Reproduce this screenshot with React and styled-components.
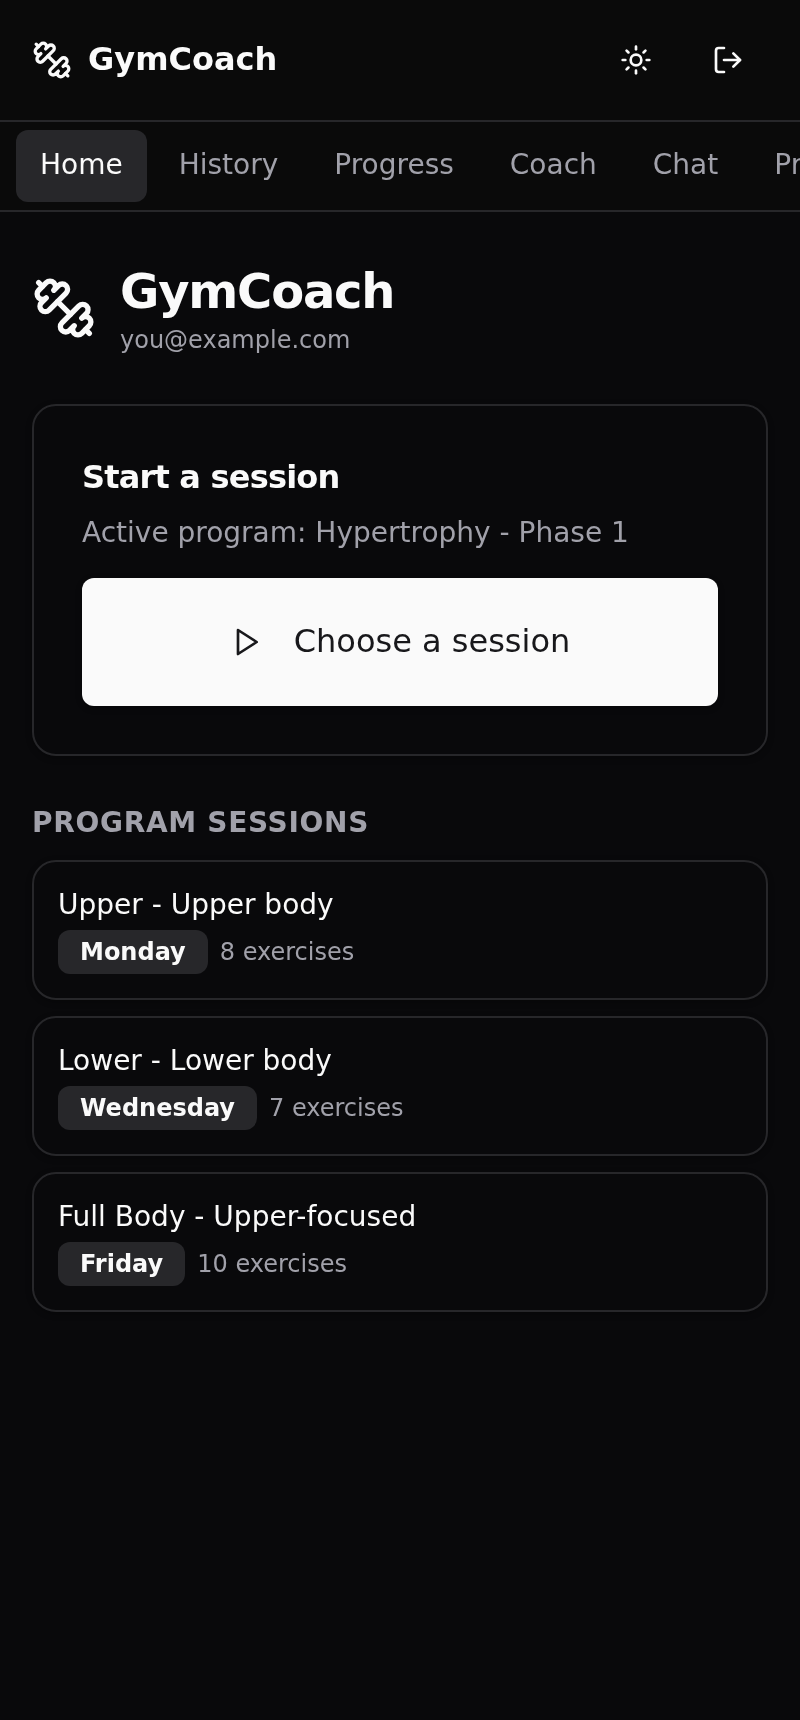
import React, { useState } from 'react'
import styled, { createGlobalStyle } from 'styled-components'
import { LogOut, Sun } from 'lucide-react'

const GlobalStyle = createGlobalStyle`
  * {
    box-sizing: border-box;
  }
  body {
    margin: 0;
    background: #09090b;
    color: #fafafa;
    font-family: 'DejaVu Sans', Verdana, sans-serif;
    font-size: 28px;
    line-height: 38px;
  }
`
const Page = styled.div`
  min-height: 100vh;
`
const Header = styled.header`
  display: flex;
  align-items: center;
  justify-content: space-between;
  padding: 20px 32px;
  background: #0a0a0a;
  border-bottom: 2px solid #27272a;
`
const Brand = styled.a`
  display: flex;
  align-items: center;
  gap: 16px;
  color: inherit;
  font-size: 32px;
  font-weight: 700;
  line-height: 46px;
  text-decoration: none;
`
const BrandName = styled.span`
  padding-bottom: 2px;
`
const Actions = styled.div`
  display: flex;
  gap: 12px;
`
const IconButton = styled.button`
  display: flex;
  align-items: center;
  justify-content: center;
  width: 80px;
  height: 80px;
  padding: 0;
  border: 0;
  border-radius: 12px;
  background: transparent;
  color: inherit;
  cursor: pointer;
  &:hover {
    background: #27272a;
  }
`
const Nav = styled.nav`
  display: flex;
  gap: 8px;
  padding: 8px 16px;
  overflow-x: auto;
  scrollbar-width: none;
  background: #0a0a0a;
  border-bottom: 2px solid #27272a;
`
const NavLink = styled.a`
  flex: none;
  padding: 16px 24px 18px;
  border-radius: 12px;
  background: ${({ $active }) => ($active ? '#27272a' : 'transparent')};
  color: ${({ $active }) => ($active ? '#fafafa' : '#a1a1aa')};
  text-decoration: none;
  white-space: nowrap;
`
const Main = styled.main`
  display: flex;
  flex-direction: column;
  gap: 48px;
  padding: 48px 32px;
`
const Hero = styled.div`
  display: flex;
  align-items: center;
  gap: 24px;
`
const Title = styled.h1`
  margin: 0 0 2px;
  font-size: 48px;
  line-height: 62px;
  letter-spacing: -0.025em;
`
const SmallText = styled.p`
  margin: 0;
  color: #a1a1aa;
  font-size: 24px;
  line-height: 32px;
`
const Card = styled.section`
  padding: 48px;
  border: 2px solid #27272a;
  border-radius: 24px;
  box-shadow: 0 2px 6px rgba(0, 0, 0, 0.3);
`
const CardTitle = styled.h2`
  margin: 0 0 14px;
  font-size: 32px;
  line-height: 46px;
  letter-spacing: -0.025em;
`
const CardText = styled.p`
  margin: 0 0 26px;
  color: #a1a1aa;
`
const PrimaryButton = styled.button`
  display: flex;
  align-items: center;
  justify-content: center;
  gap: 32px;
  width: 100%;
  height: 128px;
  border: 0;
  border-radius: 12px;
  background: #fafafa;
  color: #18181b;
  font-family: inherit;
  font-size: 32px;
  line-height: 46px;
  box-shadow: 0 2px 6px rgba(0, 0, 0, 0.3);
  cursor: pointer;
`
const ButtonLabel = styled.span`
  padding-bottom: 2px;
`
const Sessions = styled.section`
  display: flex;
  flex-direction: column;
  gap: 18px;
`
const SectionTitle = styled.h2`
  margin: 0;
  color: #a1a1aa;
  font-size: 28px;
  letter-spacing: 0.025em;
  text-transform: uppercase;
`
const SessionList = styled.ul`
  display: flex;
  flex-direction: column;
  gap: 16px;
  margin: 0;
  padding: 0;
  list-style: none;
`
const SessionItem = styled.li`
  display: flex;
  flex-direction: column;
  gap: 6px;
  padding: 24px;
  border: 2px solid #27272a;
  border-radius: 24px;
  box-shadow: 0 2px 6px rgba(0, 0, 0, 0.3);
`
const SessionMeta = styled.div`
  display: flex;
  align-items: center;
  gap: 12px;
`
const DayBadge = styled.span`
  padding: 6px 22px;
  border-radius: 12px;
  background: #27272a;
  font-size: 24px;
  font-weight: 700;
  line-height: 32px;
`

const zNav = [
  { name: 'Home', link: '#home' },
  { name: 'History', link: '#history' },
  { name: 'Progress', link: '#progress' },
  { name: 'Coach', link: '#coach' },
  { name: 'Chat', link: '#chat' },
  { name: 'Programs', link: '#programs' },
]

const zSessions = [
  { name: 'Upper - Upper body', day: 'Monday', exercises: 8 },
  { name: 'Lower - Lower body', day: 'Wednesday', exercises: 7 },
  { name: 'Full Body - Upper-focused', day: 'Friday', exercises: 10 },
]

const StrokeIcon = ({ size, children }) => (
  <svg width={size} height={size} viewBox="0 0 24 24" fill="none" stroke="currentColor" strokeWidth="2" strokeLinecap="round" strokeLinejoin="round" aria-hidden="true">
    {children}
  </svg>
)

const DumbbellIcon = ({ size }) => (
  <StrokeIcon size={size}>
    <path d="M14.4 14.4 9.6 9.6" />
    <path d="M18.657 21.485a2 2 0 1 1-2.829-2.828l-1.767 1.768a2 2 0 1 1-2.829-2.829l6.364-6.364a2 2 0 1 1 2.829 2.829l-1.768 1.767a2 2 0 1 1 2.828 2.829z" />
    <path d="m21.5 21.5-1.4-1.4" />
    <path d="M3.9 3.9 2.5 2.5" />
    <path d="M6.404 12.768a2 2 0 1 1-2.829-2.829l1.768-1.767a2 2 0 1 1-2.828-2.829l2.828-2.828a2 2 0 1 1 2.829 2.828l1.767-1.768a2 2 0 1 1 2.829 2.829z" />
  </StrokeIcon>
)

const PlayIcon = ({ size }) => (
  <StrokeIcon size={size}>
    <polygon points="6 3 20 12 6 21 6 3" />
  </StrokeIcon>
)

const App = () => {
  const [current, setCurrent] = useState('Home')

  return (
    <>
      <GlobalStyle />
      <Page>
        <Header>
          <Brand href="#home">
            <DumbbellIcon size={40} />
            <BrandName>GymCoach</BrandName>
          </Brand>
          <Actions>
            <IconButton type="button" aria-label="Toggle theme">
              <Sun size={32} />
            </IconButton>
            <IconButton type="button" aria-label="Log out">
              <LogOut size={32} />
            </IconButton>
          </Actions>
        </Header>
        <Nav>
          {zNav.map((item) => (
            <NavLink key={item.name} href={item.link} $active={item.name === current} onClick={() => setCurrent(item.name)}>
              {item.name}
            </NavLink>
          ))}
        </Nav>
        <Main>
          <Hero>
            <DumbbellIcon size={64} />
            <div>
              <Title>GymCoach</Title>
              <SmallText>you@example.com</SmallText>
            </div>
          </Hero>
          <Card>
            <CardTitle>Start a session</CardTitle>
            <CardText>Active program: Hypertrophy - Phase 1</CardText>
            <PrimaryButton type="button">
              <PlayIcon size={32} />
              <ButtonLabel>Choose a session</ButtonLabel>
            </PrimaryButton>
          </Card>
          <Sessions>
            <SectionTitle>Program sessions</SectionTitle>
            <SessionList>
              {zSessions.map((item) => (
                <SessionItem key={item.name}>
                  <span>{item.name}</span>
                  <SessionMeta>
                    <DayBadge>{item.day}</DayBadge>
                    <SmallText>{item.exercises} exercises</SmallText>
                  </SessionMeta>
                </SessionItem>
              ))}
            </SessionList>
          </Sessions>
        </Main>
      </Page>
    </>
  )
}

export default App
